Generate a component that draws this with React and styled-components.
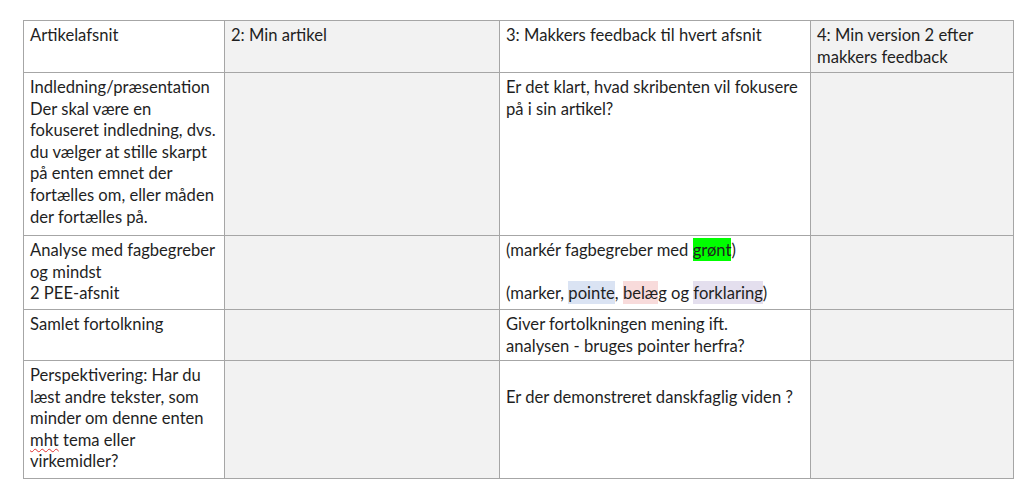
import styled, { createGlobalStyle } from "styled-components";

const GlobalStyle = createGlobalStyle`
  html, body {
    margin: 0;
    padding: 0;
    background: #ffffff;
  }
  body {
    font-family: Lato, "Liberation Sans", sans-serif;
    color: #1f1f1f;
  }
`;

const Page = styled.div`
  width: 1024px;
  height: 486px;
  padding: 20px 0 0 23px;
  box-sizing: border-box;
  background: #fff;
`;

const Table = styled.table`
  border-collapse: collapse;
  table-layout: fixed;
  width: 990px;
  font-size: 16.6px;
  line-height: 21.6px;
`;

const Row = styled.tr`
  height: ${(p) => p.$h}px;
`;

const Cell = styled.td`
  border: 1px solid #a6a6a6;
  background: ${(p) => (p.$shaded ? "#f2f2f2" : "#ffffff")};
  vertical-align: top;
  padding: 4px 6px 0 6px;
  white-space: nowrap;
  overflow: hidden;
`;

const Mark = styled.span`
  background: ${(p) => p.$bg};
  padding: 2px 0 1px;
`;

const Squiggle = styled.span`
  text-decoration: underline wavy #e03030;
  text-decoration-thickness: 1px;
  text-underline-offset: 2px;
`;

const cols = [201, 275, 311, 203];

export default function App() {
  return (
    <>
      <GlobalStyle />
      <Page>
        <Table>
          <colgroup>
            {cols.map((w, i) => (
              <col key={i} style={{ width: w }} />
            ))}
          </colgroup>
          <tbody>
            <Row $h={52}>
              <Cell>Artikelafsnit</Cell>
              <Cell $shaded>2: Min artikel</Cell>
              <Cell>3: Makkers feedback til hvert afsnit</Cell>
              <Cell $shaded>
                4: Min version 2 efter
                <br />
                makkers feedback
              </Cell>
            </Row>
            <Row $h={163}>
              <Cell>
                Indledning/præsentation
                <br />
                Der skal være en
                <br />
                fokuseret indledning, dvs.
                <br />
                du vælger at stille skarpt
                <br />
                på enten emnet der
                <br />
                fortælles om, eller måden
                <br />
                der fortælles på.
              </Cell>
              <Cell $shaded />
              <Cell>
                Er det klart, hvad skribenten vil fokusere
                <br />
                på i sin artikel?
              </Cell>
              <Cell $shaded />
            </Row>
            <Row $h={74}>
              <Cell>
                Analyse med fagbegreber
                <br />
                og mindst
                <br />2 PEE-afsnit
              </Cell>
              <Cell $shaded />
              <Cell>
                (markér fagbegreber med <Mark $bg="#00ff00">grønt</Mark>)
                <br />
                <br />
                (marker, <Mark $bg="#dae3f3">pointe</Mark>,{" "}
                <Mark $bg="#f8dbdb">belæ</Mark>g og{" "}
                <Mark $bg="#e4dfee">forklaring</Mark>)
              </Cell>
              <Cell $shaded />
            </Row>
            <Row $h={51}>
              <Cell>Samlet fortolkning</Cell>
              <Cell $shaded />
              <Cell>
                Giver fortolkningen mening ift.
                <br />
                analysen - bruges pointer herfra?
              </Cell>
              <Cell $shaded />
            </Row>
            <Row $h={118}>
              <Cell>
                Perspektivering: Har du
                <br />
                læst andre tekster, som
                <br />
                minder om denne enten
                <br />
                <Squiggle>mht</Squiggle> tema eller
                <br />
                virkemidler?
              </Cell>
              <Cell $shaded />
              <Cell>
                <br />
                Er der demonstreret danskfaglig viden ?
              </Cell>
              <Cell $shaded />
            </Row>
          </tbody>
        </Table>
      </Page>
    </>
  );
}
